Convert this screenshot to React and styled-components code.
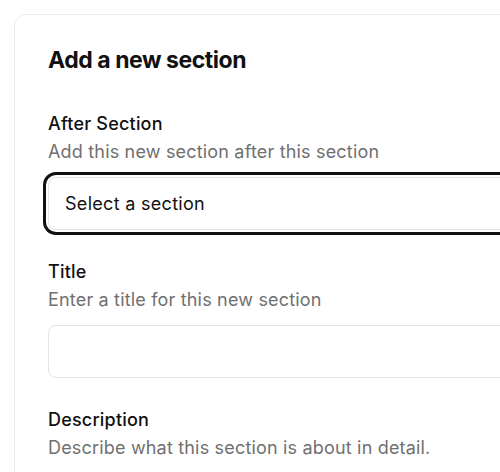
import styled, { createGlobalStyle } from 'styled-components';

const GlobalStyle = createGlobalStyle`
  html, body {
    margin: 0;
    background: #ffffff;
    overflow: hidden;
  }
  body {
    font-family: Inter, "Noto Sans", sans-serif;
    color: #111111;
  }
`;

const Page = styled.div`
  padding: 14px;
  width: 700px;
`;

const Card = styled.section`
  border: 1px solid #ececec;
  border-radius: 12px;
  padding: 29px 33px 40px;
  display: flex;
  flex-direction: column;
  gap: 36px;
`;

const Heading = styled.h2`
  margin: 0;
  font-size: 23px;
  line-height: 32px;
  font-weight: 700;
  letter-spacing: -0.45px;
`;

const Fields = styled.div`
  display: flex;
  flex-direction: column;
  gap: 30px;
`;

const Field = styled.div`
  display: flex;
  flex-direction: column;
`;

const Label = styled.label`
  font-size: 18px;
  line-height: 24px;
  font-weight: 500;
  letter-spacing: 0.2px;
`;

const Hint = styled.p`
  margin: 4px 0 13px;
  font-size: 18px;
  line-height: 24px;
  letter-spacing: 0.18px;
  color: #707070;
`;

const Box = styled.div`
  height: 53px;
  box-sizing: border-box;
  border: 1px solid #e2e2e2;
  border-radius: 8px;
  display: flex;
  align-items: center;
  padding: 0 16px;
  font-size: 18px;
  letter-spacing: 0.3px;
  background: #fff;
  box-shadow: ${(p) => (p.$focused ? '0 0 0 2px #fff, 0 0 0 5px #111' : 'none')};
`;

const FormField = ({ label, hint, value, focused }) => (
  <Field>
    <Label>{label}</Label>
    {hint && <Hint>{hint}</Hint>}
    {value !== undefined && <Box $focused={focused}>{value}</Box>}
  </Field>
);

const App = () => (
  <>
    <GlobalStyle />
    <Page>
      <Card>
        <Heading>Add a new section</Heading>
        <Fields>
          <FormField
            label="After Section"
            hint="Add this new section after this section"
            value="Select a section"
            focused
          />
          <FormField
            label="Title"
            hint="Enter a title for this new section"
            value=""
          />
          <FormField
            label="Description"
            hint="Describe what this section is about in detail."
            value=""
          />
        </Fields>
      </Card>
    </Page>
  </>
);

export default App;
